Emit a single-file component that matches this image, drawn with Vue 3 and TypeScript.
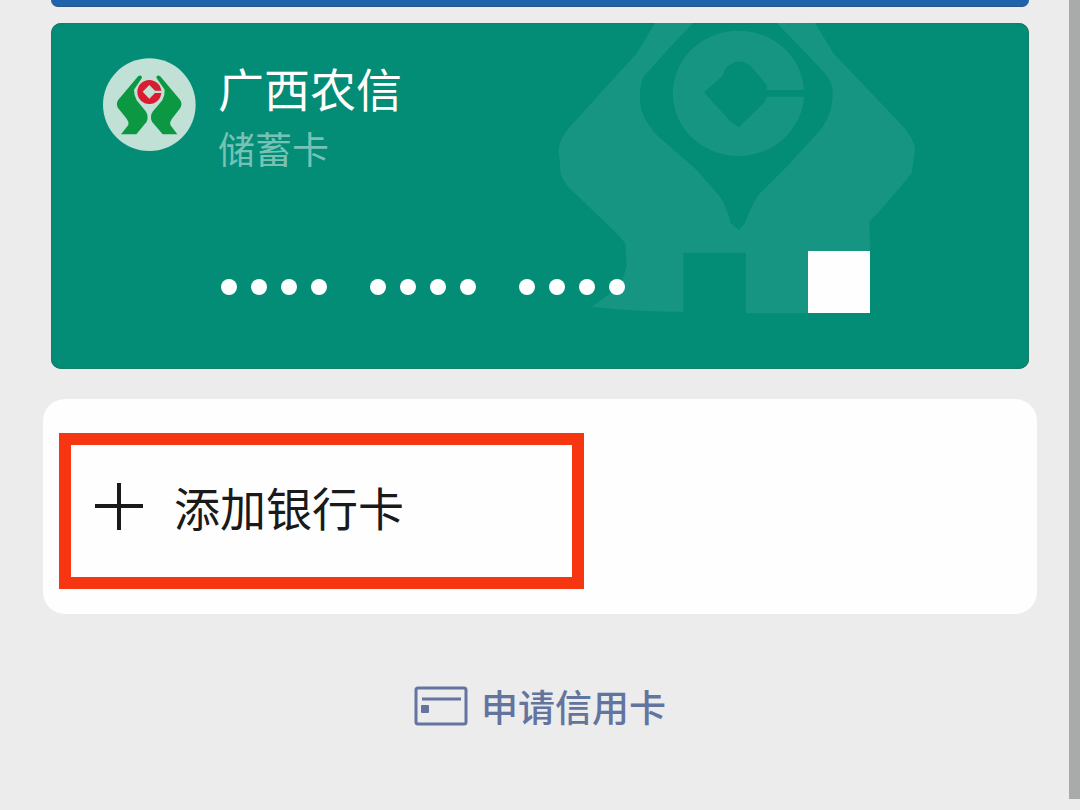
<script setup lang="ts">
interface BankCard {
  bank: string
  kind: string
  groups: number
  dotsPerGroup: number
}

const card: BankCard = {
  bank: '广西农信',
  kind: '储蓄卡',
  groups: 3,
  dotsPerGroup: 4,
}
</script>

<template>
  <div class="page">
    <main class="content">
      <div class="previous-card"></div>

      <section class="bank-card">
        <svg class="watermark" viewBox="45 39 1092 900" aria-hidden="true">
          <path
            fill-rule="evenodd"
            d="M345 39 L290 130 L90 350 Q60 380 56 420 L62 490 Q70 520 100 545 L225 665 L256 700 L260 770 L240 830 L155 890 Q290 905 430 905 L430 728 L618 728 L618 910 L850 910 L990 720 L988 635 L1035 585 L1115 490 L1125 415 Q1120 385 1090 350 L880 130 L825 39 L710 39 L765 95 L855 190 Q880 215 878 260 Q875 325 830 372 L740 470 L655 555 Q632 590 615 640 L597 660 L572 640 Q560 590 540 560 L470 480 L350 375 Q300 320 300 270 Q298 215 315 195 L410 90 L460 39 Z"
          />
          <path
            d="M792 240 A197 188 0 1 0 792 260 L680 260 L675 275 L597 352 L572 335 L492 247 L545 200 L560 170 L585 155 H610 L630 165 L680 225 V240 Z"
          />
        </svg>

        <header class="card-head">
          <svg class="logo" viewBox="10 11 279 279" aria-hidden="true">
            <circle cx="149" cy="151" r="139" fill="#c1e0d6" />
            <path
              fill="#0c9842"
              d="M116 65 Q126 60 127 70 L103 106 Q103 124 111 138 L138 171 Q148 186 141 202 L110 240 H64 L86 212 Q88 201 81 193 L55 161 Q48 148 56 136 Z"
            />
            <path
              fill="#0c9842"
              d="M181 65 Q171 60 170 70 L195 106 Q196 124 188 138 L160 171 Q149 186 157 202 L189 240 H233 L212 212 Q210 201 217 193 L242 161 Q249 148 241 136 Z"
            />
            <circle cx="149" cy="113" r="36" fill="#d91c2f" />
            <path fill="#c1e0d6" d="M149 92 L166 109 H186 V116 H166 L149 133 L129 112 Z" />
          </svg>
          <div class="names">
            <h1>{{ card.bank }}</h1>
            <p>{{ card.kind }}</p>
          </div>
        </header>

        <div class="number">
          <div class="groups">
            <div v-for="g in card.groups" :key="g" class="group">
              <span v-for="d in card.dotsPerGroup" :key="d" class="dot"></span>
            </div>
          </div>
          <span class="hidden-digits"></span>
        </div>
      </section>

      <section class="add-panel">
        <button type="button" class="add-button">
          <svg class="plus" viewBox="0 0 48 48" aria-hidden="true">
            <path d="M24 1 V48 M0 24 H48" />
          </svg>
          <span>添加银行卡</span>
        </button>
      </section>

      <a class="apply" href="#">
        <svg class="card-icon" viewBox="0 0 54 40" aria-hidden="true">
          <rect x="2" y="2" width="50" height="36" rx="2" fill="none" stroke="#63749f" stroke-width="3" />
          <path d="M8 13 H47" stroke="#63749f" stroke-width="3" />
          <rect x="7" y="19" width="8" height="8" rx="1" fill="#63749f" />
        </svg>
        <span>申请信用卡</span>
      </a>
    </main>
    <div class="scroll-track"><div class="scroll-thumb"></div></div>
  </div>
</template>

<style>
body {
  background: #ececed;
}
</style>

<style scoped>
.page {
  display: grid;
  grid-template-columns: 1fr 11px;
  min-height: 100vh;
  background: #ececed;
  font-family: "Noto Sans CJK SC", sans-serif;
}

.content {
  display: flex;
  flex-direction: column;
  padding: 0 40px 0 51px;
}

.previous-card {
  height: 7px;
  box-sizing: border-box;
  border-bottom: 1px solid #2b568b;
  border-radius: 0 0 10px 10px;
  background: #1e63ab;
}

.bank-card {
  position: relative;
  margin-top: 16px;
  padding: 35px 52px 56px;
  border-radius: 10px;
  background: #038c76;
  box-shadow: inset 0 0 1px 1px #1a7a69;
}

.watermark {
  position: absolute;
  top: 0;
  right: 110px;
  width: 364px;
  height: 300px;
  fill: #179583;
}

.card-head {
  position: relative;
  display: flex;
  gap: 22px;
}

.logo {
  width: 93px;
  height: 93px;
}

.names {
  padding-top: 1px;
}

h1 {
  margin: 0;
  font-size: 46px;
  font-weight: 400;
  line-height: 56px;
  color: #fff;
}

p {
  margin: 9px 0 0;
  font-size: 37px;
  line-height: 48px;
  color: #78c2b5;
}

.number {
  position: relative;
  display: flex;
  align-items: center;
  gap: 183px;
  margin: 79px 0 0 118px;
}

.groups {
  display: flex;
  gap: 43px;
  padding-top: 10px;
}

.group {
  display: flex;
  gap: 14px;
}

.dot {
  width: 16px;
  height: 16px;
  border-radius: 50%;
  background: #fff;
}

.hidden-digits {
  width: 62px;
  height: 62px;
  background: #fefefe;
}

.add-panel {
  margin: 30px -8px 0;
  padding: 34px 16px 25px;
  border-radius: 22px;
  background: #fefefe;
}

.add-button {
  display: flex;
  align-items: center;
  gap: 31px;
  box-sizing: border-box;
  width: 525px;
  max-width: 100%;
  padding: 31px 24px 41px;
  border: 12px solid #f63511;
  background: #fefefe;
  font-family: inherit;
  font-size: 46px;
  line-height: 60px;
  color: #1a1a1a;
  cursor: pointer;
}

.plus {
  width: 48px;
  height: 48px;
  fill: none;
  stroke: #1a1a1a;
  stroke-width: 4;
}

.apply {
  display: flex;
  align-items: center;
  align-self: center;
  gap: 13px;
  margin-top: 64px;
  font-size: 37px;
  font-weight: 500;
  line-height: 56px;
  color: #63749f;
  text-decoration: none;
}

.card-icon {
  width: 54px;
  height: 40px;
}

.scroll-track {
  padding-bottom: 11px;
  display: flex;
}

.scroll-thumb {
  flex: 1;
  background: #a9aaaa;
}
</style>
